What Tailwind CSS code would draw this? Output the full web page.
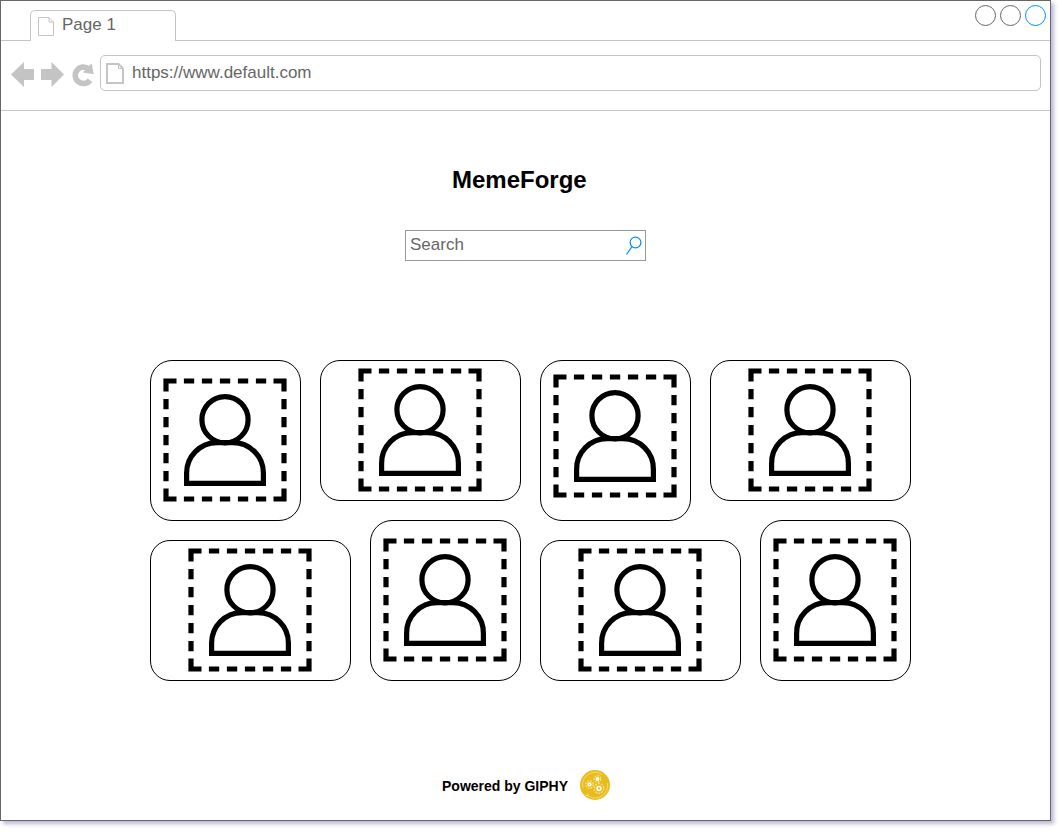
<!DOCTYPE html>
<html lang="en">
<head>
<meta charset="utf-8">
<title>MemeForge</title>
<script src="https://cdn.jsdelivr.net/npm/@tailwindcss/browser@4"></script>
</head>
<body class="bg-white h-[832px] overflow-hidden font-['Liberation_Sans',Arial,sans-serif]">
<svg class="hidden">
  <symbol id="person" viewBox="-62 -62 124 124">
    <g fill="none" stroke="#000" stroke-width="5.2">
      <path d="M-48.5-59H-59V-48.5M48.5-59H59V-48.5M-48.5 59H-59V48.5M48.5 59H59V48.5"/>
      <path stroke-dasharray="10.3 7.7" d="M-41.1-59H41.2M-41.1 59H41.2M-59-41.1V41.2M59-41.1V41.2"/>
      <circle cx="0" cy="-20.3" r="23.100"/>
      <path d="M-38.4 43.4V33.500A30.500 30.500 0 0 1-7.900 2.6H7.900A30.500 30.500 0 0 1 38.4 33.500V43.4Z"/>
    </g>
  </symbol>
</svg>
<div class="w-[1051px] h-[821px] border border-[#666] bg-white shadow-[3px_3px_4px_rgba(90,90,150,0.42)] flex flex-col">
  <header class="h-10 flex shrink-0">
    <div class="w-[29px] border-b border-[#c4c4c4]"></div>
    <div class="w-[146px] mt-[9px] border border-b-0 border-[#c4c4c4] rounded-t-[5px] flex pl-[7px] text-[17px] leading-[19px] text-[#666]">
      <svg class="w-4 h-[19px] mt-[6px] shrink-0" viewBox="0 0 16 19" fill="none" stroke="#c4c4c4"><path d="M.5.5H11L15.5 5V18.5H.5ZM11 .5V5H15.5"/></svg>
      <span class="pl-2 pt-1">Page 1</span>
    </div>
    <div class="flex-1 border-b border-[#c4c4c4] flex justify-end gap-1 pt-1 pr-[4px]">
      <div class="size-[21px] rounded-full border border-[#666]"></div>
      <div class="size-[21px] rounded-full border border-[#666]"></div>
      <div class="size-[21px] rounded-full border border-[#008cff]"></div>
    </div>
  </header>
  <nav class="h-[70px] shrink-0 border-b border-[#c4c4c4] flex pt-[14px] pl-[10px] pr-[9px]">
    <svg class="w-[89px] h-9 shrink-0" viewBox="11 55 89 36">
      <path fill="#c4c4c4" d="M11 74.500L24 62V69H34V80H24V87ZM64 74.500L51.500 62V69H41V80H51.500V87Z"/>
      <path fill="none" stroke="#c4c4c4" stroke-width="5.600" d="M90 80.200A8.200 8.200 0 1 1 88.700 69"/>
      <path fill="#c4c4c4" d="M91.700 63.500L93.800 74.200L83 72.400L86.500 68Z"/>
    </svg>
    <div class="flex-1 h-9 border border-[#c4c4c4] rounded-[5px] flex pl-[5px] text-[17px] leading-[19px] text-[#666]">
      <svg class="w-[18px] h-[21px] mt-[7px] shrink-0" viewBox="0 0 18 21" fill="none" stroke="#c4c4c4"><path stroke-width="2" d="M1 1H12.500L17 5.500V20H1Z"/><path d="M12.500 1V5.500H17"/></svg>
      <span class="pl-2 pt-[7px]">https://www.default.com</span>
    </div>
  </nav>
  <main class="flex flex-col pl-[149px]">
    <h1 class="mt-[55px] ml-[302px] text-2xl leading-[28px] font-bold">MemeForge</h1>
    <div class="mt-9 ml-[255px] w-[241px] h-[31px] border border-[#999] flex justify-between pl-1 pr-[3px] text-[17px] leading-[19px] text-[#666]">
      <span class="pt-1">Search</span>
      <svg class="w-[17px] h-[19px] mt-[5px]" viewBox="625 236 17 19" fill="none" stroke="#008cff" stroke-width="1.200"><circle cx="635.500" cy="242.500" r="5.400"/><path d="M632 246.700L626.500 254.500"/></svg>
    </div>
    <section class="mt-[99px] flex items-start gap-[19px] h-[160px]">
      <div class="w-[151px] h-[161px] border border-black rounded-[22px] flex justify-center items-start pt-[17px] pr-px"><svg class="size-[124px]"><use href="#person"/></svg></div>
      <div class="w-[201px] h-[141px] border border-black rounded-[20px] flex justify-center items-start pt-[7px] pr-px"><svg class="size-[124px]"><use href="#person"/></svg></div>
      <div class="w-[151px] h-[161px] border border-black rounded-[22px] flex justify-center items-start pt-[13px] pr-px"><svg class="size-[124px]"><use href="#person"/></svg></div>
      <div class="w-[201px] h-[141px] border border-black rounded-[20px] flex justify-center items-start pt-[7px] pr-px"><svg class="size-[124px]"><use href="#person"/></svg></div>
    </section>
    <section class="flex items-end gap-[19px] h-[161px]">
      <div class="w-[201px] h-[141px] border border-black rounded-[20px] flex justify-center items-start pt-[7px] pr-px"><svg class="size-[124px]"><use href="#person"/></svg></div>
      <div class="w-[151px] h-[161px] border border-black rounded-[22px] flex justify-center items-start pt-[17px] pr-px"><svg class="size-[124px]"><use href="#person"/></svg></div>
      <div class="w-[201px] h-[141px] border border-black rounded-[20px] flex justify-center items-start pt-[7px] pr-px"><svg class="size-[124px]"><use href="#person"/></svg></div>
      <div class="w-[151px] h-[161px] border border-black rounded-[22px] flex justify-center items-start pt-[17px] pr-px"><svg class="size-[124px]"><use href="#person"/></svg></div>
    </section>
    <footer class="mt-[89px] ml-[292px] flex items-center gap-3 text-sm leading-4 font-bold">
      <span class="pt-[2px]">Powered by GIPHY</span>
      <svg class="size-[30px]" viewBox="0 0 30 30" fill="none" stroke="#f8e59a">
        <circle cx="15" cy="15" r="15" fill="#e8bc1c" stroke="none"/>
        <path stroke-width=".7" d="M3 18A12.500 12.500 0 0 1 22 4.500M27.500 13A12.700 12.700 0 0 1 7 25.200M5 24.500L7.500 26L8 23.500"/>
        <g stroke-width="1.200" stroke-dasharray="1.800 1.200"><circle cx="9.500" cy="14.500" r="3.800"/><circle cx="17.500" cy="9" r="3.300"/><circle cx="19" cy="18.500" r="4.800"/></g>
        <g stroke="#fff" stroke-width="1.500"><circle cx="9.500" cy="14.500" r="1.400"/><circle cx="17.500" cy="9" r="1.200"/><circle cx="19" cy="18.500" r="1.900"/></g>
      </svg>
    </footer>
  </main>
</div>
</body>
</html>
